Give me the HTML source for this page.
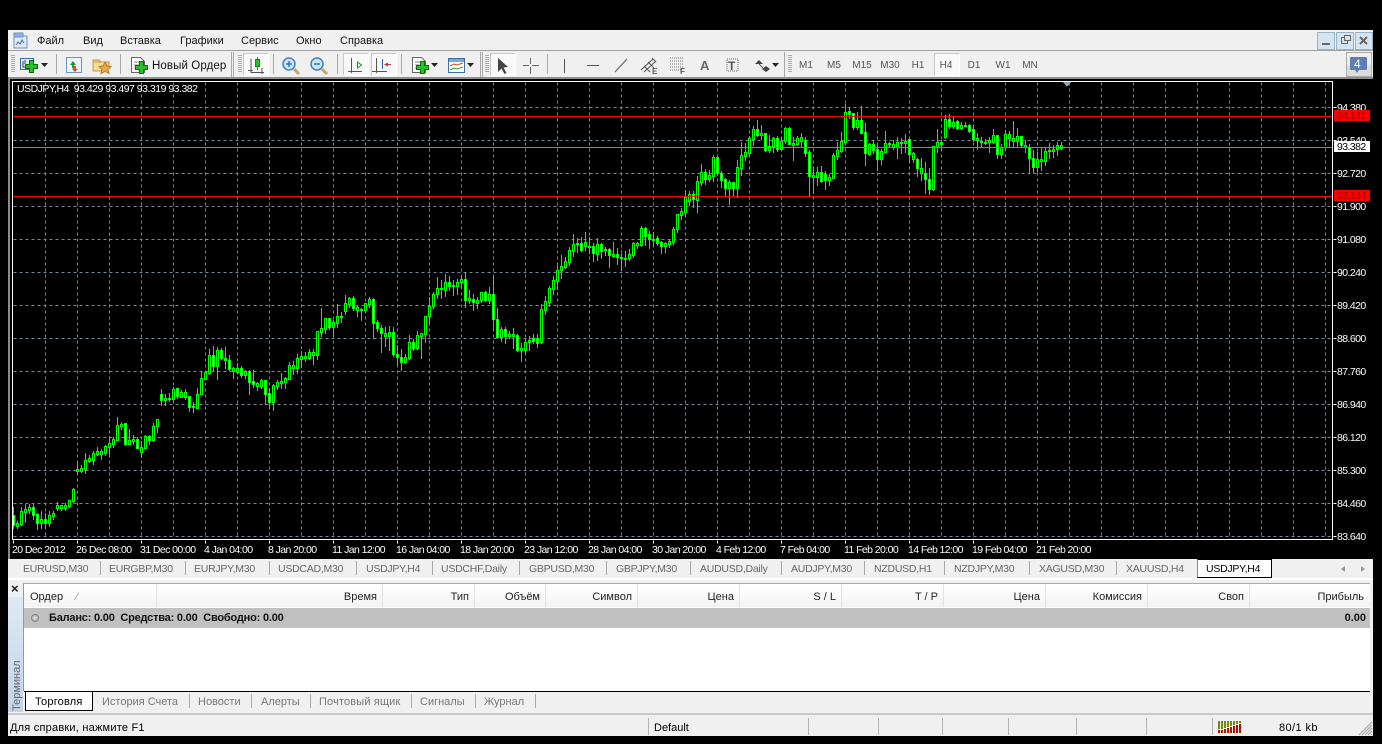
<!DOCTYPE html>
<html lang="ru"><head><meta charset="utf-8"><title>MetaTrader</title>
<style>
html,body{margin:0;padding:0;background:#000;width:1382px;height:744px;overflow:hidden}
body{position:relative;font-family:"Liberation Sans","Noto Sans CJK JP",sans-serif;font-size:11px;color:#000}
.b{position:absolute}
.t{position:absolute;white-space:nowrap;line-height:14px;height:14px}
.m{font-size:11px;color:#111;top:34px}
.a{font-size:10.5px;letter-spacing:-.58px;color:#fff;margin-top:2px}
.p{left:1337px}
.d{top:541px}
.tb{top:562px;font-size:10.5px;letter-spacing:-.25px;color:#666}
.s{position:absolute;width:1px;background:#a9a9a9}
.h{top:590px;font-size:11px;color:#222;text-align:right}
.c{position:absolute;width:1px;top:584px;height:23px;background:#e2e2e2}
.bt{top:695px;font-size:11px;color:#777}
.tf{top:59px;font-size:10px;color:#555;width:24px;text-align:center}
.st{position:absolute;width:1px;top:718px;height:17px;background:#b4b4b4}
</style></head><body>
<div class="b" style="left:8px;top:30px;width:1365px;height:706px;background:#f0f0f0"></div>
<div class="b" style="left:8px;top:50px;width:1365px;height:1px;background:#a0a0a0"></div>
<div class="b" style="left:8px;top:77px;width:1365px;height:2px;background:#8e8e8e"></div>
<div class="b" style="left:8px;top:79px;width:2px;height:480px;background:#8a8a8a"></div>
<div class="b" style="left:10px;top:79px;width:1363px;height:480px;background:#000"></div>

<span class="t m" style="left:37px">Файл</span><span class="t m" style="left:83px">Вид</span><span class="t m" style="left:120px">Вставка</span><span class="t m" style="left:180px">Графики</span><span class="t m" style="left:241px">Сервис</span><span class="t m" style="left:296px">Окно</span><span class="t m" style="left:340px">Справка</span>

<div class="b" style="left:1317px;top:32px;width:16px;height:16px;background:#d4e4f3;border:1px solid #9db2c6"></div>
<div class="b" style="left:1336px;top:32px;width:16px;height:16px;background:#d4e4f3;border:1px solid #9db2c6"></div>
<div class="b" style="left:1355px;top:32px;width:16px;height:16px;background:#d4e4f3;border:1px solid #9db2c6"></div>
<div class="b" style="left:1346px;top:52px;width:24px;height:23px;background:linear-gradient(#eee 55%,#dcdcdc 55%);border:1px solid #aaa"></div>

<div class="b" style="left:243px;top:53px;width:24px;height:21px;background:#f9f9f9;border:1px solid;border-color:#c8c8c8 #fff #fff #c8c8c8"></div>
<div class="b" style="left:343px;top:53px;width:24px;height:21px;background:#f9f9f9;border:1px solid;border-color:#c8c8c8 #fff #fff #c8c8c8"></div>
<div class="b" style="left:371px;top:53px;width:24px;height:21px;background:#f9f9f9;border:1px solid;border-color:#c8c8c8 #fff #fff #c8c8c8"></div>
<div class="b" style="left:490px;top:53px;width:24px;height:21px;background:#f9f9f9;border:1px solid;border-color:#c8c8c8 #fff #fff #c8c8c8"></div>
<div class="b" style="left:934px;top:53px;width:24px;height:21px;background:#f9f9f9;border:1px solid;border-color:#c8c8c8 #fff #fff #c8c8c8"></div>
<span class="t" style="left:152px;top:59px;font-size:11.5px;letter-spacing:.1px;color:#111">Новый Ордер</span>
<span class="t tf" style="left:794px">M1</span><span class="t tf" style="left:822px">M5</span><span class="t tf" style="left:850px">M15</span><span class="t tf" style="left:878px">M30</span><span class="t tf" style="left:906px">H1</span><span class="t tf" style="left:934px">H4</span><span class="t tf" style="left:962px">D1</span><span class="t tf" style="left:991px">W1</span><span class="t tf" style="left:1018px">MN</span>

<svg class="b" style="left:0;top:0" width="1382" height="744" viewBox="0 0 1382 744">
<defs><path id="pl" d="M4 0h4v4h4v4H8v4H4V8H0V4h4z" fill="#27c127" stroke="#0b6d0b"/></defs>
<rect x="14" y="36" width="13" height="12" fill="#dfeaf6" stroke="#6f94c4"/><rect x="14" y="33" width="9" height="4" fill="#8fb0dc" stroke="#6f94c4"/><path d="M16 45l2-3 2 2 2-4 2 3" fill="none" stroke="#4a70a8"/>
<g fill="none" stroke="#aaa" stroke-width="4" stroke-dasharray="1 1"><path d="M13 55V73M240 55V73M487 55V73M790 55V73"/></g>
<g stroke="#a8a8a8" fill="none"><path d="M56.500 54V74M120.500 54V74M273.500 54V74M337.500 54V74M401.500 54V74M547.500 54V74"/><path d="M231.500 52V77M233.500 52V77M480.500 52V77M482.500 52V77M784.500 52V77"/></g>
<rect x="20.500" y="58.500" width="13" height="11" fill="#dcebf8" stroke="#3a6ea5"/><path d="M23 61v6h6M25 60v4" stroke="#444" fill="none"/>
<use href="#pl" transform="translate(25.500 60.500)"/><path d="M41 63h7l-3.500 4z" fill="#222"/>
<rect x="66.500" y="57.500" width="15" height="15" fill="#eef4fb" stroke="#6f94c4"/><path d="M70 65l3-4 3 4h-2v3h-2v-3z" fill="#1e9a1e"/><path d="M73 66h3v3h2l-3 3-3-3h1z" fill="#d8502a"/>
<path d="M93 60h6l2 2h8v5H93z" fill="#eed27a" stroke="#b99a45"/><path d="M93 62h13l-1 9H93z" fill="#f3dd95" stroke="#bda052"/><path d="M105 62l1.900 4 4.100.5-3 3 1 4-4-2.200-4 2.200 1-4-3-3 4.100-.5z" fill="#eea950" stroke="#b67e2e"/>
<path d="M131.500 57.500h9l4 4v11h-13z" fill="#fff" stroke="#666"/><path d="M134 62h6M134 65h7M134 68h4" stroke="#888"/>
<use href="#pl" transform="translate(135.500 61.500)"/>
<path d="M251 58.500v14h13M248 70.500h5M262 68v6" stroke="#555" fill="none"/><path d="M257.500 57v13" stroke="#0c9a0c"/><rect x="255.500" y="59.500" width="4" height="7" fill="#27c127" stroke="#0c8a0c"/>
<g fill="#cfe3f7" stroke="#3d82c0" stroke-width="1.500"><circle cx="289" cy="64" r="6"/><circle cx="317" cy="64" r="6"/></g>
<path d="M294 69l5 5M322 69l5 5" stroke="#c7a469" stroke-width="3"/><path d="M286 64h6M289 61v6" stroke="#2f76b8" stroke-width="1.500"/><path d="M314 64h6" stroke="#2f76b8" stroke-width="1.500"/>
<path d="M351.500 58v15M348 71.500h14M376.500 58v15M372 71.500h15" stroke="#555" fill="none"/><path d="M357.500 62v6l4-3z" fill="none" stroke="#139f13"/><path d="M382.500 59v10" stroke="#2d5ea8"/><path d="M384 64.500l4-2v4zM388 64h3v1h-3" fill="#c0392b"/>
<path d="M412.500 57.500h9l4 4v11h-13z" fill="#fff" stroke="#666"/><path d="M415 62h6M415 65h7M415 68h4" stroke="#888"/><use href="#pl" transform="translate(416.500 61.500)"/><path d="M431 63h7l-3.500 4z" fill="#222"/>
<rect x="448.500" y="58.500" width="16" height="14" fill="#fff" stroke="#3a6ea5"/><rect x="449" y="59" width="15" height="3" fill="#7ea6d8"/><path d="M450 66l4-2 3 1 6-2" stroke="#cc4b2c" fill="none"/><path d="M450 70l4-2 3 1 6-2" stroke="#2f9a2f" fill="none"/><path d="M467 63h7l-3.500 4z" fill="#222"/>
<path d="M498 58l0 14 3.500-3.500 3 5.500 2-1-3-5.500 4.500-.5z" fill="#444"/>
<path d="M530.500 58v6M530.500 67v7M523 65.500h6M532 65.500h7" stroke="#666" fill="none"/>
<path d="M564.500 59v14" stroke="#555"/><path d="M587 65.500h12" stroke="#555"/><path d="M615 72l12-13" stroke="#777" stroke-width="1.300"/>
<path d="M641 70l12-11M644 72l12-11M644 66l6 6M648 62l6 6M652 58l4 4" stroke="#555" fill="none"/>
<path d="M670 58h14M670 61h14M670 64h14M670 67h14M670 70h11" stroke="#777" stroke-dasharray="1 1"/>
<text x="652" y="74" font-size="8" font-weight="bold" fill="#555" font-family="Liberation Sans">E</text><text x="680" y="74" font-size="8" font-weight="bold" fill="#555" font-family="Liberation Sans">F</text>
<text x="700" y="70" font-size="13" font-weight="bold" fill="#666" font-family="Liberation Sans">A</text>
<rect x="727" y="59" width="11" height="12" fill="none" stroke="#666" stroke-dasharray="1 1"/><text x="728" y="70" font-size="12" font-weight="bold" fill="#555" font-family="Liberation Sans">T</text>
<path d="M755 64l4-4 4 4zM762 69l4-3 4 3-4 3z" fill="#444"/><path d="M759 64l4 4" stroke="#555"/><path d="M772 63h7l-3.500 4z" fill="#222"/>
<path d="M1322 43h8v2h-8z" fill="#666"/><rect x="1341.500" y="37.500" width="6" height="6" fill="none" stroke="#666"/><rect x="1344.500" y="35.500" width="6" height="5" fill="#d4e4f3" stroke="#666"/><path d="M1360 37l7 7M1367 37l-7 7" stroke="#666" stroke-width="2"/>
<path d="M1351 57h15q1 0 1 1v11q0 1-1 1h-7l-2 3-2-3h-4q-1 0-1-1V58q0-1 1-1z" fill="#5f7fb4"/><text x="1354" y="68" font-size="12" fill="#fff" font-family="Liberation Sans">4</text>
</svg>

<svg class="b" style="left:0;top:0" width="1382" height="744" viewBox="0 0 1382 744" shape-rendering="crispEdges">
<g fill="none" stroke="#778899" stroke-dasharray="3 3" transform="translate(.5 .5)">
<path d="M13 107H1332M13 140H1332M13 173H1332M13 206H1332M13 239H1332M13 272H1332M13 305H1332M13 338H1332M13 371H1332M13 404H1332M13 437H1332M13 470H1332M13 503H1332M13 536H1332"/>
<path d="M45 82V539M77 82V539M109 82V539M141 82V539M173 82V539M205 82V539M237 82V539M269 82V539M301 82V539M333 82V539M365 82V539M397 82V539M429 82V539M461 82V539M493 82V539M525 82V539M557 82V539M589 82V539M621 82V539M653 82V539M685 82V539M717 82V539M749 82V539M781 82V539M813 82V539M845 82V539M877 82V539M909 82V539M941 82V539M973 82V539M1005 82V539M1037 82V539M1069 82V539M1101 82V539M1133 82V539M1165 82V539M1197 82V539M1229 82V539M1261 82V539M1293 82V539M1325 82V539"/>
</g>
<g transform="translate(.5 0)" fill="none">
<path stroke="#0f0" d="M13 507V529M17 521V529M21 507V526M25 504V523M29 504V514M33 504V520M37 513V530M41 511V529M45 513V528M49 511V527M53 511V520M57 502V511M61 505V511M65 503V511M69 500V508M73 488V503M77 463V475M81 465V473M85 453V474M89 455V463M93 451V465M97 447V456M101 449V460M105 445V456M109 436V455M113 437V448M117 417V441M121 422V430M125 423V446M129 429V445M133 435V445M137 437V449M141 441V458M145 435V449M149 435V445M153 423V442M157 419V433M161 389V406M165 394V406M169 393V402M173 387V401M177 388V399M181 390V398M185 389V400M189 396V412M193 402V413M197 388V409M201 371V395M205 371V380M209 349V375M213 346V371M217 347V380M221 348V360M225 347V369M229 355V371M233 367V379M237 363V374M241 366V378M245 370V379M249 370V395M253 370V388M257 382V391M261 379V389M265 380V405M269 388V409M273 384V411M277 380V390M281 373V389M285 377V389M289 362V380M293 361V375M297 354V374M301 351V368M305 352V362M309 349V360M313 349V365M317 331V360M321 308V337M325 318V334M329 318V330M333 320V337M337 304V328M341 312V323M345 295V315M349 297V308M353 296V311M357 305V317M361 308V321M365 303V311M369 297V308M373 298V339M377 320V332M381 325V353M385 327V347M389 326V351M393 327V357M397 345V366M401 349V371M405 354V364M409 335V360M413 339V351M417 331V350M421 333V359M425 316V343M429 297V324M433 292V309M437 277V299M441 280V299M445 274V297M449 276V291M453 280V296M457 279V295M461 275V289M465 272V308M469 290V304M473 294V311M477 297V309M481 292V303M485 291V302M489 287V304M493 277V331M497 308V339M501 327V342M505 327V344M509 331V339M513 328V349M517 334V352M521 343V362M525 339V354M529 336V351M533 334V344M537 334V348M541 304V344M545 296V315M549 286V307M553 276V295M557 265V290M561 255V279M565 257V269M569 247V266M573 234V257M577 238V253M581 237V252M585 232V251M589 237V254M593 243V262M597 238V261M601 243V259M605 247V256M609 248V268M613 242V258M617 248V265M621 254V271M625 251V267M629 249V261M633 242V258M637 242V249M641 226V247M645 227V246M649 231V249M653 232V247M657 236V246M661 241V254M665 242V253M669 239V248M673 227V245M677 214V233M681 208V220M685 190V217M689 191V206M693 191V208M697 176V213M701 164V186M705 169V185M709 170V182M713 155V182M717 157V176M721 171V188M725 178V196M729 180V205M733 182V196M737 160V198M741 142V176M745 143V161M749 136V156M753 126V146M757 120V137M761 125V140M765 133V152M769 135V153M773 137V153M777 136V152M781 137V151M785 127V144M789 127V145M793 137V161M797 136V146M801 133V147M805 137V157M809 150V197M813 167V194M817 167V186M821 166V183M825 171V190M829 174V186M833 153V179M837 142V160M841 132V153M845 104V143M849 107V119M853 113V130M857 112V130M861 106V134M865 123V166M869 143V156M873 140V154M877 145V171M881 149V165M885 131V153M889 142V148M893 140V150M897 137V159M901 138V154M905 134V153M909 139V163M913 152V163M917 158V177M921 158V181M925 162V194M929 168V195M933 146V191M937 129V153M941 140V151M945 115V139M949 114V129M953 117V129M957 120V130M961 122V130M965 122V127M969 124V133M973 125V142M977 133V150M981 137V147M985 139V145M989 137V153M993 129V144M997 135V159M1001 144V159M1005 130V150M1009 131V148M1013 121V148M1017 128V148M1021 136V148M1025 140V153M1029 144V173M1033 150V173M1037 152V172M1041 147V171M1045 147V166M1049 143V159M1053 145V158M1057 142V156M1061 142V150"/>
<path stroke="#0f0" stroke-width="3" d="M17 523V527M21 511V525M25 509V513M29 507V511M33 507V516M37 514V524M41 519V524M45 519V524M49 515V524M53 513V517M57 505V509M61 505V509M65 505V509M69 500V507M73 489V502M77 469V472M81 468V472M85 460V470M89 458V462M93 453V461M97 451V455M101 451V455M105 446V454M109 443V448M113 439V445M117 425V441M121 424V427M125 423V445M129 440V445M133 439V442M137 439V449M141 447V453M145 436V449M149 436V441M153 426V441M157 419V427M161 394V401M165 398V401M169 398V400M173 389V400M177 388V397M181 392V398M185 392V398M189 396V408M193 406V408M197 394V409M201 378V395M205 372V380M209 355V374M213 355V367M217 350V367M221 350V359M225 358V361M229 360V370M233 368V372M237 368V373M241 368V376M245 371V376M249 371V383M253 381V385M257 383V387M261 380V387M265 380V395M269 393V403M273 385V403M277 382V387M281 381V384M285 378V383M289 365V380M293 365V369M297 358V369M301 356V360M305 356V359M309 352V359M313 352V356M317 331V356M321 328V333M325 318V330M329 318V328M333 322V328M337 316V324M341 316V318M345 303V312M349 298V305M353 298V309M357 307V311M361 309V311M365 303V311M369 299V305M373 299V324M377 322V329M381 328V334M385 333V337M389 332V337M393 332V355M397 354V358M401 357V363M405 357V363M409 342V359M413 342V349M417 335V349M421 333V337M425 316V335M429 306V317M433 294V307M437 288V295M441 288V290M445 282V291M449 282V287M453 285V287M457 282V287M461 279V283M465 279V301M469 298V301M473 299V303M477 300V304M481 292V301M485 292V301M489 294V301M493 294V320M497 319V338M501 329V338M505 329V337M509 334V337M513 334V337M517 335V351M521 348V351M525 342V351M529 340V343M533 338V342M537 338V344M541 309V343M545 301V311M549 288V303M553 280V290M557 270V282M561 266V271M565 261V268M569 250V263M573 244V252M577 243V245M581 243V251M585 242V247M589 246V248M593 246V254M597 244V255M601 244V252M605 249V251M609 249V256M613 254V257M617 254V258M621 257V259M625 258V260M629 254V259M633 243V256M637 243V246M641 228V246M645 228V237M649 234V240M653 239V241M657 238V244M661 242V247M665 243V247M669 241V245M673 229V243M677 214V230M681 211V216M685 197V213M689 194V202M693 194V200M697 181V201M701 172V183M705 172V180M709 175V180M713 157V177M717 157V174M721 173V181M725 179V189M729 182V189M733 182V189M737 167V189M741 155V169M745 152V157M749 138V154M753 129V140M757 129V136M761 133V136M765 133V151M769 146V151M773 138V147M777 138V150M781 141V150M785 128V142M789 128V145M793 143V146M797 138V145M801 137V142M805 140V154M809 152V177M813 175V178M817 172V178M821 172V182M825 174V181M829 177V181M833 155V179M837 150V157M841 141V152M845 112V143M849 111V115M853 113V128M857 120V128M861 120V134M865 132V154M869 144V155M873 144V151M877 149V160M881 151V160M885 143V153M889 143V145M893 144V148M897 142V148M901 142V144M905 141V144M909 139V155M913 153V160M917 159V169M921 168V174M925 173V180M929 179V190M933 146V190M937 142V148M941 142V145M945 119V138M949 119V127M953 122V127M957 121V129M961 125V129M965 125V127M969 125V132M973 129V140M977 138V141M981 141V143M985 142V144M989 140V143M993 135V143M997 135V155M1001 147V155M1005 134V148M1009 134V139M1013 138V142M1017 136V142M1021 136V146M1025 145V148M1029 147V159M1033 158V168M1037 159V168M1041 159V162M1045 151V162M1049 150V152M1053 149V152M1057 145V150M1061 145V149"/>
<path stroke="#0f0" stroke-width="2" d="M14 515V526"/>
<path stroke="#000" d="M17 524V526M21 512V524M25 510V512M29 508V510M41 520V523M49 516V523M53 514V516M57 506V508M61 506V508M65 506V508M69 501V506M73 490V501M77 470V471M81 469V471M85 461V469M89 459V461M93 454V460M97 452V454M101 452V454M105 447V453M109 444V447M113 440V444M117 426V440M121 425V426M129 441V444M133 440V441M141 448V452M145 437V448M153 427V440M157 420V426M165 399V400M173 390V399M181 393V397M185 393V397M197 395V408M201 379V394M205 373V379M209 356V373M217 351V366M233 369V371M237 369V372M245 372V375M257 384V386M261 381V386M273 386V402M277 383V386M281 382V383M285 379V382M289 366V379M293 366V368M297 359V368M301 357V359M305 357V358M309 353V358M313 353V355M317 332V355M321 329V332M325 319V329M333 323V327M337 317V323M345 304V311M349 299V304M357 308V310M365 304V310M369 300V304M385 334V336M389 333V336M405 358V362M409 343V358M417 336V348M421 334V336M425 317V334M429 307V316M433 295V306M437 289V294M445 283V290M457 283V286M461 280V282M469 299V300M477 301V303M481 293V300M489 295V300M501 330V337M509 335V336M513 335V336M521 349V350M525 343V350M529 341V342M541 310V342M545 302V310M549 289V302M553 281V289M557 271V281M561 267V270M565 262V267M569 251V262M573 245V251M585 243V246M597 245V254M613 255V256M629 255V258M633 244V255M637 244V245M641 229V245M665 244V246M669 242V244M673 230V242M677 215V229M681 212V215M685 198V212M689 195V201M697 182V200M701 173V182M709 176V179M713 158V176M729 183V188M737 168V188M741 156V168M745 153V156M749 139V153M753 130V139M761 134V135M769 147V150M773 139V146M781 142V149M785 129V141M793 144V145M797 139V144M801 138V141M813 176V177M817 173V177M829 178V180M833 156V178M837 151V156M841 142V151M845 113V142M857 121V127M869 145V154M881 152V159M885 144V152M893 145V147M897 143V147M905 142V143M913 154V159M921 169V173M933 147V189M937 143V147M945 120V137M953 123V126M961 126V128M977 139V140M989 141V142M993 136V142M1001 148V154M1005 135V147M1009 135V138M1013 139V141M1017 137V141M1025 146V147M1037 160V167M1041 160V161M1045 152V161M1053 150V151M1057 146V149M1061 146V148"/>
<path stroke="#fff" d="M13 516V525M33 508V515M37 515V523M45 520V523M125 424V444M137 440V448M149 437V440M161 395V400M177 389V396M189 397V407M213 356V366M221 351V358M229 361V369M241 369V375M249 372V382M253 382V384M265 381V394M269 394V402M329 319V327M353 299V308M373 300V323M377 323V328M381 329V333M393 333V354M397 355V357M401 358V362M413 343V348M449 283V286M465 280V300M473 300V302M485 293V300M493 295V319M497 320V337M505 330V336M517 336V350M533 339V341M537 339V343M581 244V250M593 247V253M601 245V251M609 250V255M617 255V257M645 229V236M649 235V239M657 239V243M661 243V246M693 195V199M705 173V179M717 158V173M721 174V180M725 180V188M733 183V188M757 130V135M765 134V150M777 139V149M789 129V144M805 141V153M809 153V176M821 173V181M825 175V180M849 112V114M853 114V127M861 121V133M865 133V153M873 145V150M877 150V159M909 140V154M917 160V168M925 174V179M929 180V189M941 143V144M949 120V126M957 122V128M969 126V131M973 130V139M997 136V154M1021 137V145M1029 148V158M1033 159V167"/>
</g>
<g fill="none" transform="translate(0 .5)">
<path stroke="#f00" d="M13 116H1333M13 196H1333"/>
<path stroke="#778899" d="M13 147H1333"/>
</g>
<rect x="12" y="81" width="1321" height="1" fill="#fff"/><rect x="12" y="539" width="1321" height="1" fill="#fff"/><rect x="12" y="81" width="1" height="459" fill="#fff"/><rect x="1332" y="81" width="1" height="459" fill="#fff"/>
<path d="M1063 82h8l-4 5z" fill="#8fa3b5"/>
<path stroke="#fff" fill="none" transform="translate(.5 .5)" d="M1333 107h3M1333 140h3M1333 173h3M1333 206h3M1333 239h3M1333 272h3M1333 305h3M1333 338h3M1333 371h3M1333 404h3M1333 437h3M1333 470h3M1333 503h3M1333 536h3M13 540v3M77 540v3M141 540v3M205 540v3M269 540v3M333 540v3M397 540v3M461 540v3M525 540v3M589 540v3M653 540v3M717 540v3M781 540v3M845 540v3M909 540v3M973 540v3M1037 540v3"/>
</svg>

<span class="t a" style="left:17px;top:80px;letter-spacing:-.5px">USDJPY,H4 &nbsp;93.429 93.497 93.319 93.382</span>
<span class="t a p" style="top:99px">94.380</span><span class="t a p" style="top:132px">93.540</span><span class="t a p" style="top:165px">92.720</span><span class="t a p" style="top:198px">91.900</span><span class="t a p" style="top:231px">91.080</span><span class="t a p" style="top:264px">90.240</span><span class="t a p" style="top:297px">89.420</span><span class="t a p" style="top:330px">88.600</span><span class="t a p" style="top:363px">87.760</span><span class="t a p" style="top:396px">86.940</span><span class="t a p" style="top:429px">86.120</span><span class="t a p" style="top:462px">85.300</span><span class="t a p" style="top:495px">84.460</span><span class="t a p" style="top:528px">83.640</span>
<div class="b" style="left:1334px;top:110px;width:36px;height:11px;background:#f00"></div><span class="t a p" style="top:107px;color:#900">94.141</span>
<div class="b" style="left:1334px;top:190px;width:36px;height:11px;background:#f00"></div><span class="t a p" style="top:187px;color:#900">92.144</span>
<div class="b" style="left:1334px;top:141px;width:36px;height:11px;background:#fff"></div><span class="t a p" style="top:138px;color:#000">93.382</span>

<span class="t a d" style="left:12px">20 Dec 2012</span><span class="t a d" style="left:76px">26 Dec 08:00</span><span class="t a d" style="left:140px">31 Dec 00:00</span><span class="t a d" style="left:204px">4 Jan 04:00</span><span class="t a d" style="left:268px">8 Jan 20:00</span><span class="t a d" style="left:332px">11 Jan 12:00</span><span class="t a d" style="left:396px">16 Jan 04:00</span><span class="t a d" style="left:460px">18 Jan 20:00</span><span class="t a d" style="left:524px">23 Jan 12:00</span><span class="t a d" style="left:588px">28 Jan 04:00</span><span class="t a d" style="left:652px">30 Jan 20:00</span><span class="t a d" style="left:716px">4 Feb 12:00</span><span class="t a d" style="left:780px">7 Feb 04:00</span><span class="t a d" style="left:844px">11 Feb 20:00</span><span class="t a d" style="left:908px">14 Feb 12:00</span><span class="t a d" style="left:972px">19 Feb 04:00</span><span class="t a d" style="left:1036px">21 Feb 20:00</span>

<div class="b" style="left:8px;top:578px;width:1365px;height:2px;background:#fff"></div>
<span class="t tb" style="left:23px">EURUSD,M30</span><span class="t tb" style="left:109px">EURGBP,M30</span><span class="t tb" style="left:194px">EURJPY,M30</span><span class="t tb" style="left:278px">USDCAD,M30</span><span class="t tb" style="left:366px">USDJPY,H4</span><span class="t tb" style="left:441px">USDCHF,Daily</span><span class="t tb" style="left:529px">GBPUSD,M30</span><span class="t tb" style="left:616px">GBPJPY,M30</span><span class="t tb" style="left:700px">AUDUSD,Daily</span><span class="t tb" style="left:791px">AUDJPY,M30</span><span class="t tb" style="left:874px">NZDUSD,H1</span><span class="t tb" style="left:954px">NZDJPY,M30</span><span class="t tb" style="left:1039px">XAGUSD,M30</span><span class="t tb" style="left:1126px">XAUUSD,H4</span>
<div class="s" style="left:100px;top:561px;height:14px"></div><div class="s" style="left:185px;top:561px;height:14px"></div><div class="s" style="left:269px;top:561px;height:14px"></div><div class="s" style="left:356px;top:561px;height:14px"></div><div class="s" style="left:432px;top:561px;height:14px"></div><div class="s" style="left:519px;top:561px;height:14px"></div><div class="s" style="left:606px;top:561px;height:14px"></div><div class="s" style="left:690px;top:561px;height:14px"></div><div class="s" style="left:781px;top:561px;height:14px"></div><div class="s" style="left:864px;top:561px;height:14px"></div><div class="s" style="left:944px;top:561px;height:14px"></div><div class="s" style="left:1029px;top:561px;height:14px"></div><div class="s" style="left:1116px;top:561px;height:14px"></div>
<div class="b" style="left:1197px;top:559px;width:75px;height:19px;background:#fff;border-left:1px solid #888;border-right:1px solid #000;border-bottom:1px solid #000;border-top:1px solid #000;box-sizing:border-box"></div>
<span class="t" style="left:1206px;top:562px;font-size:10.500px;letter-spacing:-.25px;color:#000">USDJPY,H4</span>
<svg class="b" style="left:1340px;top:563px" width="28" height="12"><path d="M5 3v6L1 6z" fill="#999"/><path d="M21 3v6l4-3z" fill="#999"/></svg>

<span class="t" style="left:11px;top:582px;font-size:13px;font-weight:bold;color:#222">×</span>
<div class="b" style="left:8px;top:597px;width:15px;height:115px;background:linear-gradient(#dfe9f3,#c2d4e6)"></div>
<span class="t" style="left:-8px;top:679px;width:50px;font-size:11px;color:#667;transform:rotate(-90deg);transform-origin:center;text-align:center">Терминал</span>
<div class="b" style="left:23px;top:583px;width:1347px;height:108px;background:#fff;border-top:1px solid #aaa;border-left:1px solid #999;box-sizing:border-box"></div>
<div class="b" style="left:24px;top:584px;width:1346px;height:23px;background:linear-gradient(#fff,#f3f3f3)"></div>
<div class="b" style="left:24px;top:608px;width:1346px;height:20px;background:#c0c0c0"></div>
<div class="c" style="left:156px"></div><div class="c" style="left:382px"></div><div class="c" style="left:474px"></div><div class="c" style="left:545px"></div><div class="c" style="left:637px"></div><div class="c" style="left:739px"></div><div class="c" style="left:841px"></div><div class="c" style="left:943px"></div><div class="c" style="left:1045px"></div><div class="c" style="left:1147px"></div><div class="c" style="left:1249px"></div>
<span class="t h" style="left:30px">Ордер</span><span class="t" style="left:76px;top:590px;font-size:11px;color:#999">⁄</span>
<span class="t h" style="right:1005px">Время</span><span class="t h" style="right:913px">Тип</span><span class="t h" style="right:842px">Объём</span><span class="t h" style="right:750px">Символ</span><span class="t h" style="right:648px">Цена</span><span class="t h" style="right:546px">S / L</span><span class="t h" style="right:444px">T / P</span><span class="t h" style="right:342px">Цена</span><span class="t h" style="right:240px">Комиссия</span><span class="t h" style="right:138px">Своп</span><span class="t h" style="right:18px">Прибыль</span>
<svg class="b" style="left:30px;top:613px" width="10" height="10"><circle cx="5" cy="5" r="3.500" fill="#b8b8b8" stroke="#888"/><circle cx="5" cy="5" r="1.500" fill="#ddd"/></svg>
<span class="t" style="left:49px;top:611px;font-size:11px;font-weight:bold;letter-spacing:-.2px;color:#111">Баланс: 0.00 &nbsp;Средства: 0.00 &nbsp;Свободно: 0.00</span>
<span class="t" style="right:16px;top:611px;font-size:11px;font-weight:bold;color:#111">0.00</span>
<div class="b" style="left:24px;top:691px;width:1346px;height:1px;background:#000"></div>
<div class="b" style="left:25px;top:692px;width:66px;height:18px;background:#fff;border-left:1px solid #000;border-right:1px solid #000;border-bottom:1px solid #000"></div>
<span class="t" style="left:35px;top:695px;font-size:11px;letter-spacing:.2px;color:#000">Торговля</span>
<span class="t bt" style="left:102px">История Счета</span><span class="t bt" style="left:198px">Новости</span><span class="t bt" style="left:261px">Алерты</span><span class="t bt" style="left:319px;letter-spacing:.15px">Почтовый ящик</span><span class="t bt" style="left:420px">Сигналы</span><span class="t bt" style="left:484px">Журнал</span>
<div class="s" style="left:189px;top:694px;height:14px"></div><div class="s" style="left:251px;top:694px;height:14px"></div><div class="s" style="left:310px;top:694px;height:14px"></div><div class="s" style="left:411px;top:694px;height:14px"></div><div class="s" style="left:475px;top:694px;height:14px"></div><div class="s" style="left:535px;top:694px;height:14px"></div>

<div class="b" style="left:8px;top:713px;width:1365px;height:2px;background:#c8c8c8"></div>
<span class="t" style="left:10px;top:721px;font-size:11px;letter-spacing:.22px;color:#000">Для справки, нажмите F1</span>
<span class="t" style="left:654px;top:721px;font-size:11px;color:#000">Default</span>
<span class="t" style="left:1279px;top:721px;font-size:11px;letter-spacing:.4px;color:#000">80/1 kb</span>
<div class="st" style="left:648px"></div><div class="st" style="left:808px"></div><div class="st" style="left:878px"></div><div class="st" style="left:942px"></div><div class="st" style="left:1008px"></div><div class="st" style="left:1076px"></div><div class="st" style="left:1146px"></div><div class="st" style="left:1212px"></div>
<svg class="b" style="left:1218px;top:721px" width="24" height="13" shape-rendering="crispEdges"><g fill="#6f8f00"><path d="M0 0h2v8H0zM3 0h2v8H3zM6 0h2v7H6zM9 0h2v6H9zM12 0h2v5h-2zM15 0h2v4h-2zM18 0h2v3h-2zM21 0h2v2h-2z"/></g><g fill="#a81500"><path d="M0 9h2v3H0zM3 9h2v3H3zM6 8h2v4H6zM9 7h2v5H9zM12 6h2v6h-2zM15 5h2v7h-2zM18 4h2v8h-2zM21 3h2v9h-2z"/></g></svg>
<svg class="b" style="left:1358px;top:721px" width="15" height="15"><path d="M14 1L1 14M14 4L4 14M14 7L7 14M14 10L10 14M14 13l-1 1" stroke="#a0a0a0" fill="none"/></svg>
</body></html>
